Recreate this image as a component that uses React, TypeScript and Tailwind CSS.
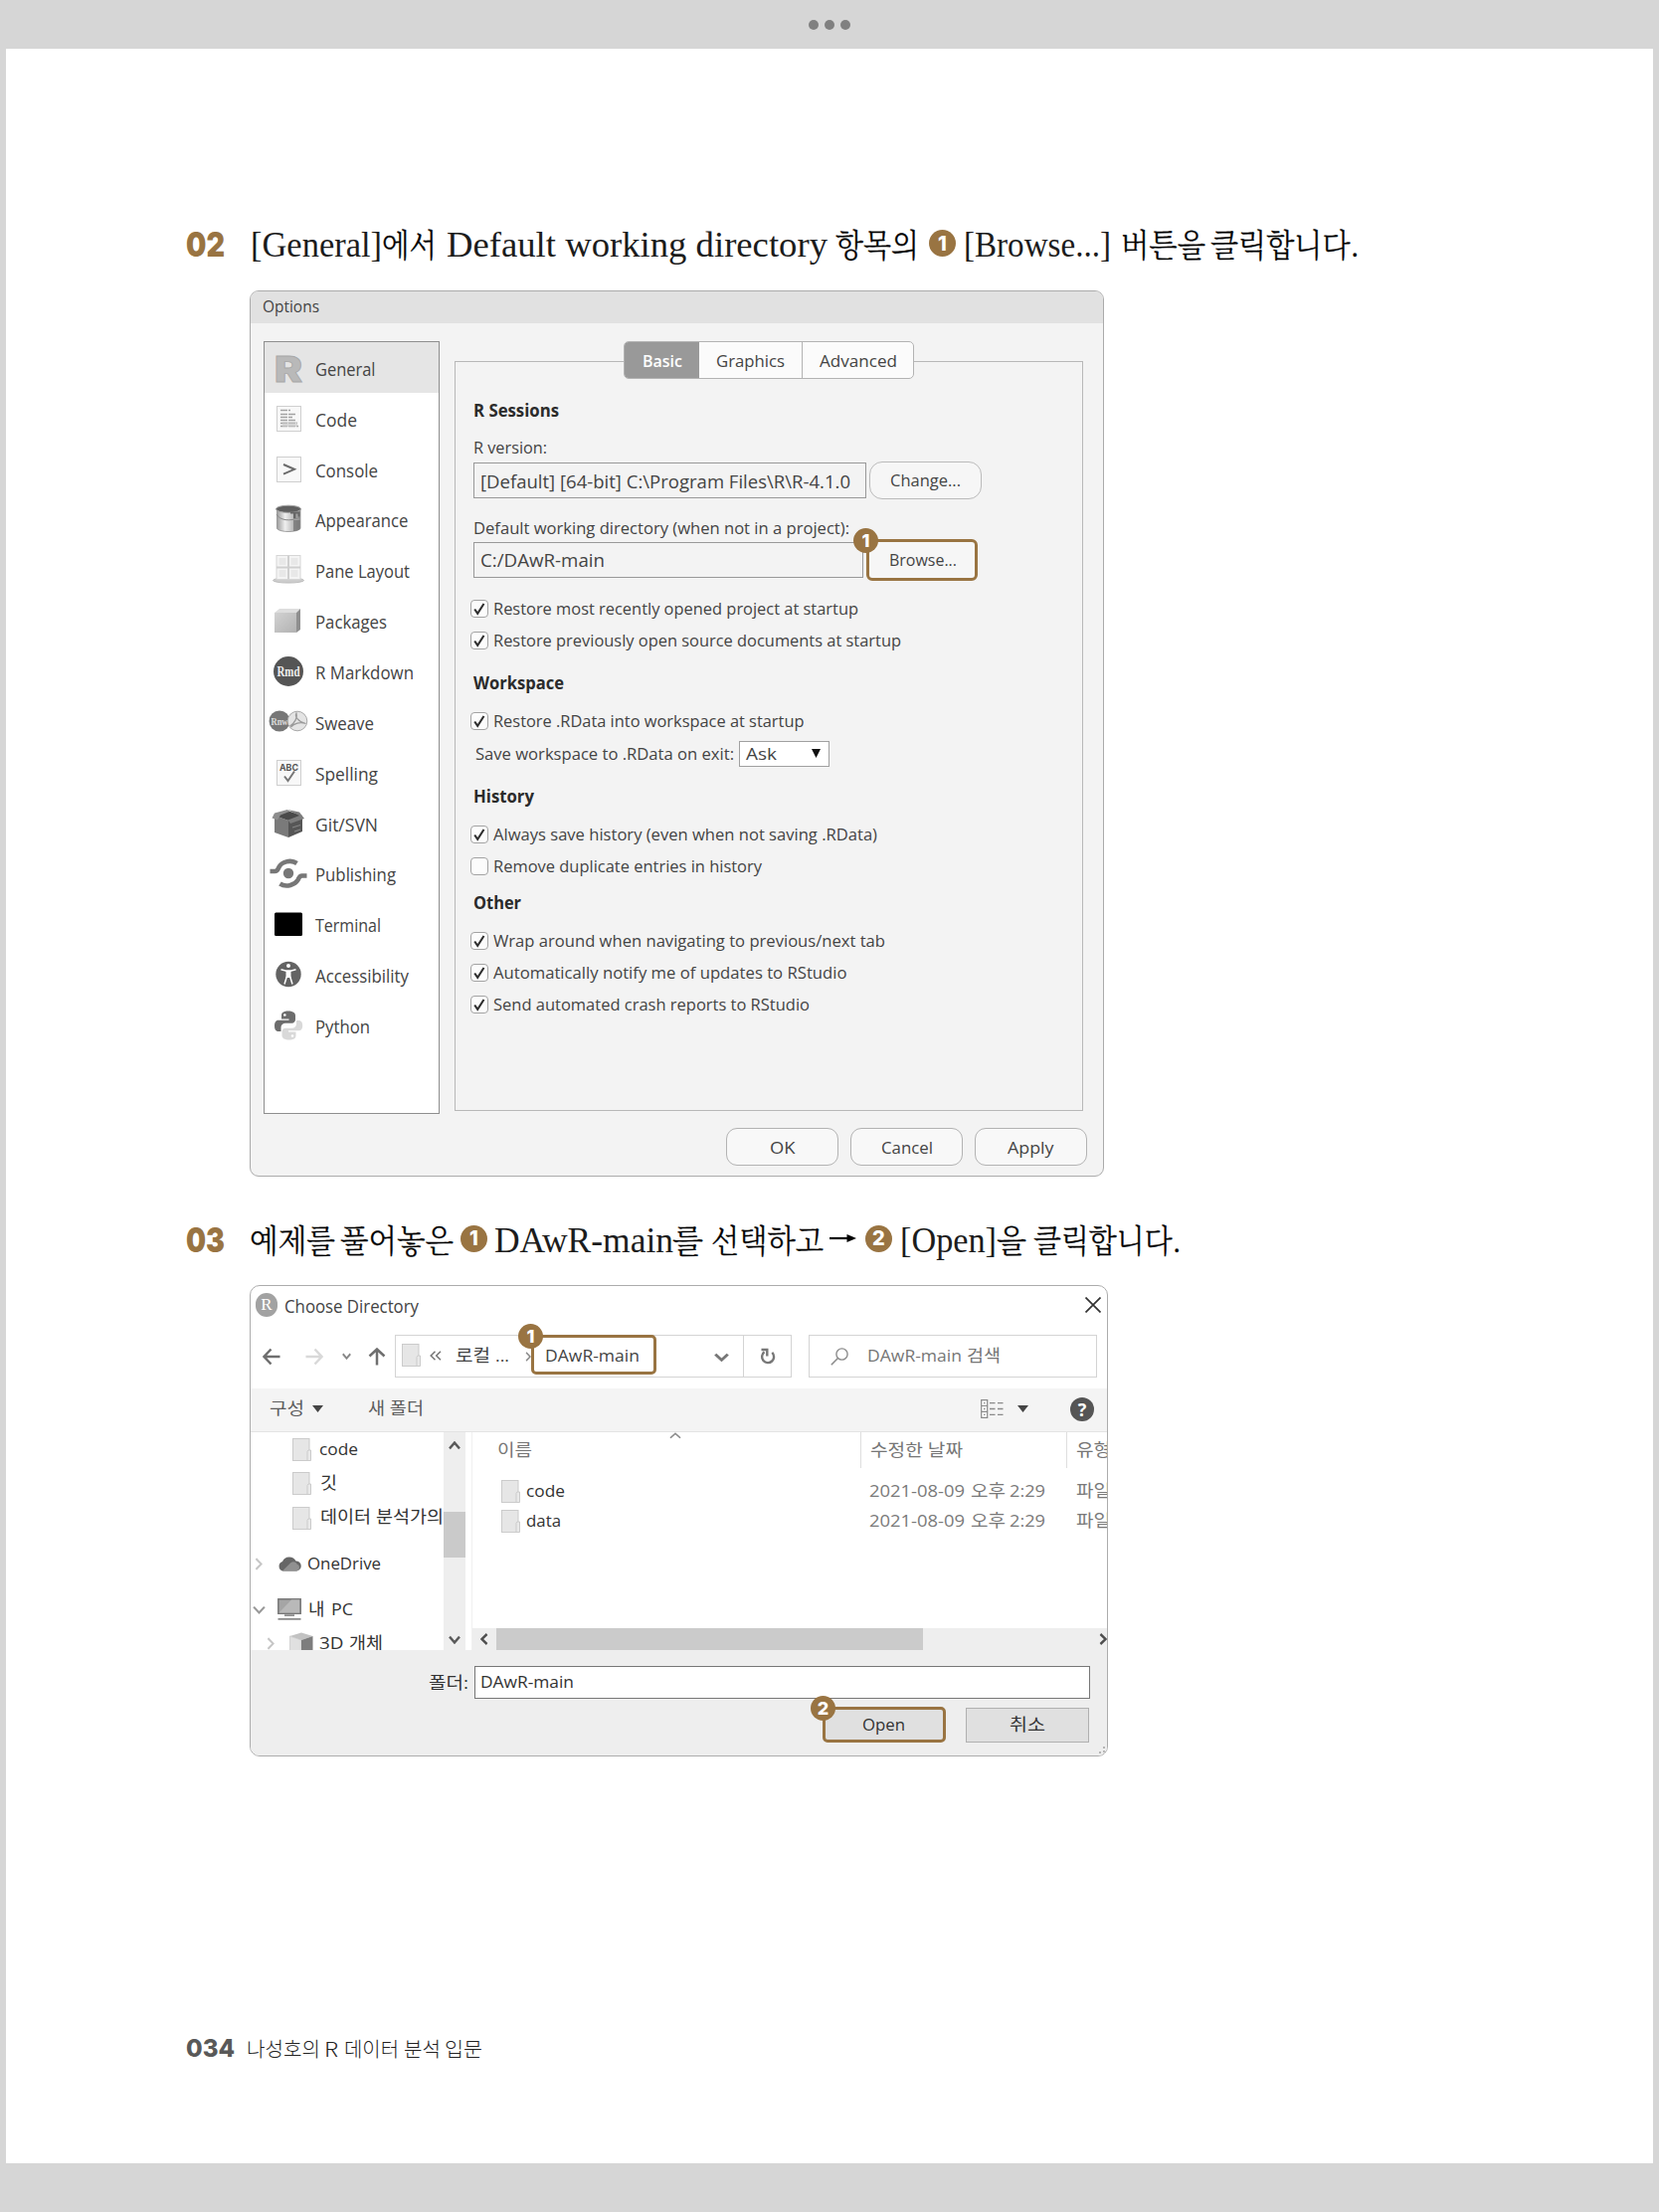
import React, { useLayoutEffect, useRef } from "react";

const UI = "font-['Open_Sans','Noto_Sans_CJK_KR',sans-serif]";

/** A run of text set to an exact width, condensed or widened as needed. */
function T({ w, c = "", children }: { w: number; c?: string; children: React.ReactNode }) {
  const ref = useRef<HTMLSpanElement>(null);
  useLayoutEffect(() => {
    const el = ref.current;
    if (!el) return;
    el.style.transform = "none";
    const n = el.getBoundingClientRect().width;
    if (n > 0) el.style.transform = `translateX(-1px) scaleX(${(w + 2) / n})`;
  }, [w]);
  return (
    <span className={`inline-block shrink-0 whitespace-pre ${c}`} style={{ width: w }}>
      <span ref={ref} className="inline-block origin-left">
        {children}
      </span>
    </span>
  );
}

function Badge({ n, c = "" }: { n: string; c?: string }) {
  return (
    <span
      className={`flex shrink-0 items-center justify-center rounded-full bg-[#997442] font-['Inter',sans-serif] leading-none font-extrabold text-white ${c}`}
    >
      {n}
    </span>
  );
}

const Lat = ({ w, c = "", children }: { w: number; c?: string; children: string }) => (
  <T w={w} c={`font-['Liberation_Serif',serif] text-[35px] leading-[40px] text-[#1c1c1c] ${c}`}>{children}</T>
);
const Kor = ({ w, c = "", children }: { w: number; c?: string; children: string }) => (
  <T w={w} c={`font-['Noto_Serif_CJK_KR','Noto_Sans_CJK_KR',serif] text-[32px] leading-[40px] font-light [-webkit-text-stroke:0.35px_#000] ${c}`}>
    {children}
  </T>
);

/* ---------- sidebar icons, 40 x 32 ---------- */

const Sheet = () => <rect x="8.5" y="3.5" width="24" height="25" fill="#f8f8f8" stroke="#cfcfcf" />;

const icons: Record<string, React.ReactNode> = {
  General: (
    <text x="6" y="29.500" fontFamily="Inter" fontWeight="900" fontSize="36" textLength="28" lengthAdjust="spacingAndGlyphs" fill="#b9b9b9" stroke="#a8a8a8" strokeWidth=".8">
      R
    </text>
  ),
  Code: (
    <g>
      <Sheet />
      <g stroke="#a2a2a2" strokeWidth="1.3">
        <path d="M12 7.5h10M12 11.5h15M12 14.5h12M12 17.5h16M12 20.5h17M12 23.500h18" strokeDasharray="7 1" />
      </g>
      <path d="M14 19h15v5H14z" fill="#c9c9c9" opacity=".6" />
    </g>
  ),
  Console: (
    <g>
      <Sheet />
      <path d="M15 11l11 4.800-11 4.800" fill="none" stroke="#6b6b6b" strokeWidth="2" />
    </g>
  ),
  Appearance: (
    <g>
      <path d="M8.500 5.500v20c3 4 20 4 23.500 0v-20z" fill="url(#metal)" stroke="#8d8d8d" strokeWidth=".8" />
      <ellipse cx="20" cy="5.800" rx="12.500" ry="3.600" fill="#5f5f5f" stroke="#a5a5a5" />
      <path d="M22 8.500h9.500v5h-2v-3h-2v5h-2.500v-5h-3z" fill="#666" />
      <path d="M8 11c3 6 13 8 24 3" fill="none" stroke="#8a8a8a" />
      <path d="M25 17h6.500v9c-2 1.500-4 2-6.500 2z" fill="#707070" opacity=".7" />
    </g>
  ),
  "Pane Layout": (
    <g>
      <ellipse cx="20" cy="26.500" rx="15.500" ry="2.600" fill="#cdcdcd" stroke="#b2b2b2" strokeWidth=".8" />
      <rect x="8" y="1.500" width="24" height="24" fill="#f4f4f4" stroke="#d6d6d6" />
      <path d="M20 1.500v24M8 13.500h24" stroke="#cfcfcf" strokeWidth="2" />
      <path d="M10.500 4h7v7h-7zM22.500 4h7v7h-7zM10.500 16h7v7h-7zM22.500 16h7v7h-7z" fill="#e8e8e8" />
    </g>
  ),
  Packages: (
    <g>
      <path d="M6 8l5-4h21l-4 4z" fill="#dedede" />
      <path d="M28 8l4-4v21l-4 3z" fill="#8f8f8f" />
      <rect x="6" y="8" width="22" height="20" fill="url(#metal2)" />
    </g>
  ),
  "R Markdown": (
    <g>
      <circle cx="20" cy="16" r="15" fill="#555" />
      <text x="8.500" y="21" fontFamily="Liberation Serif" fontWeight="700" fontSize="14" textLength="23" lengthAdjust="spacingAndGlyphs" fill="#eee">
        Rmd
      </text>
    </g>
  ),
  Sweave: (
    <g>
      <circle cx="11" cy="15" r="10.500" fill="#777" />
      <text x="2.500" y="19" fontFamily="Liberation Serif" fontWeight="700" fontSize="10" textLength="17" lengthAdjust="spacingAndGlyphs" fill="#ddd">
        Rnw
      </text>
      <circle cx="29" cy="15" r="9.800" fill="#e4e4e4" stroke="#a9a9a9" />
      <path d="M21.500 20c5-3 8-9 6.500-13-2 3 2 9 9.500 10.500-6-2-12 0-15 3.500" fill="none" stroke="#999" strokeWidth="1.200" />
    </g>
  ),
  Spelling: (
    <g>
      <Sheet />
      <text x="11" y="14" fontFamily="Inter" fontWeight="700" fontSize="9" textLength="19" lengthAdjust="spacingAndGlyphs" fill="#555">
        ABC
      </text>
      <path d="M16 19.500l3.500 4.500L26 14.500" fill="none" stroke="#777" strokeWidth="2" />
    </g>
  ),
  "Git/SVN": (
    <g>
      <path d="M6 8l14 5v17L6 25z" fill="#7a7a7a" />
      <path d="M20 13l14-5v16l-14 6z" fill="#565656" />
      <path d="M6 8l13-5 15 5-14 5z" fill="#4a4a4a" />
      <path d="M19 2L6 5.500 3.500 10.500 9 12.500l3-5L21 4z" fill="#8d8d8d" />
      <path d="M19 2l12 2.500 5 6.500-14 5-2.500-3.500L31 8z" fill="#7d7d7d" />
      <path d="M24 20l8-2.500M26 24l6-2" stroke="#858585" strokeWidth="1.200" />
    </g>
  ),
  Publishing: (
    <g fill="none" stroke="#777" strokeWidth="4.600">
      <circle cx="20" cy="16" r="5.200" fill="#777" stroke="none" />
      <path d="M1.500 14h4.800c2.800 0 3-2 4.300-4.400C13 5 22 1.500 28.500 6" />
      <path d="M38.500 18.500h-4.800c-2.800 0-3 2-4.300 4.400C27 27 18 31 11.500 26.500" />
    </g>
  ),
  Terminal: <rect x="6" y="4.500" width="28" height="23.500" rx="1.500" fill="#000" />,
  Accessibility: (
    <g>
      <circle cx="20" cy="15.500" r="12.700" fill="#636363" />
      <circle cx="20" cy="7" r="2" fill="#fff" />
      <path d="M12.500 10.800l5.500 1.400h4l5.500-1.400M18.300 18L16 25.500M21.700 18L24 25.500" fill="none" stroke="#fff" strokeWidth="1.500" />
      <path d="M17.500 11.500h5v7.500h-5z" fill="#fff" />
    </g>
  ),
  Python: (
    <g>
      <path d="M20 1.500c-5 0-7 1.500-7 4.500v3.500h7.500v1.300H10C7 10.800 6 13.500 6 16.500s1 5.500 4 5.500h2.500v-4c0-2.500 2-4.300 4.500-4.300h6.500c2 0 3.500-1.700 3.500-3.700V6c0-3-3-4.500-7-4.500z" fill="#6d6d6d" />
      <path d="M20.500 30.500c5 0 7-1.500 7-4.500v-3.500H20v-1.300h10.500c3 0 3.700-2.700 3.700-5.200s-1-5-4-5H28v3.500c0 2.500-2 4.300-4.500 4.300H17c-2 0-3.500 1.700-3.500 3.700V26c0 3 3 4.500 7 4.500z" fill="#d9d9d9" />
      <circle cx="16.300" cy="5.500" r="1.300" fill="#fff" />
      <circle cx="24" cy="26.500" r="1.300" fill="#fff" />
    </g>
  ),
};

const nav: [string, number][] = [
  ["General", 58.5], ["Code", 40], ["Console", 61], ["Appearance", 91.5], ["Pane Layout", 93],
  ["Packages", 70], ["R Markdown", 97], ["Sweave", 57], ["Spelling", 61], ["Git/SVN", 61],
  ["Publishing", 79], ["Terminal", 64], ["Accessibility", 92], ["Python", 53],
];

function Check({ w, on = true, c, children }: { w: number; on?: boolean; c: string; children: string }) {
  return (
    <div className={`-ml-[4px] flex h-6 items-center ${c}`}>
      <span className="flex size-[18px] shrink-0 items-center justify-center rounded-[4px] border border-[#a3a3a3] bg-[#fcfcfc]">
        {on && (
          <svg viewBox="0 0 16 16" className="size-[16px]">
            <path d="M3.200 8.500l3 4.300L12.500 3" fill="none" stroke="#2e2e2e" strokeWidth="2.100" />
          </svg>
        )}
      </span>
      <T w={w} c="ml-[6px] text-[17px] leading-6">{children}</T>
    </div>
  );
}

const Head = ({ w, c, children }: { w: number; c: string; children: string }) => (
  <div className={`h-6 ${c}`}>
    <T w={w} c="text-[17px] leading-6 font-bold text-[#2b2b2b]">{children}</T>
  </div>
);

const Btn = ({ w, children }: { w: number; children: string }) => (
  <div className="flex h-[38px] w-[113px] items-center justify-center rounded-[11px] border border-[#b3b3b3] bg-[#f8f8f8]">
    <T w={w} c="pt-px text-[17px]">{children}</T>
  </div>
);

function OptionsDialog() {
  return (
    <div className={`ml-[63px] flex h-[891px] w-[859px] flex-col overflow-hidden rounded-[9px] border border-[#ababab] bg-[#f3f3f3] text-[#444] ${UI}`}>
      <div className="flex h-[32px] shrink-0 items-center bg-[#e1e1e1] pb-[2px] pl-[13px]">
        <T w={55} c="text-[16.5px]">Options</T>
      </div>
      <div className="flex pt-[18px] pl-[13px]">
        <svg className="absolute h-0 w-0" aria-hidden>
          <defs>
            <linearGradient id="metal" x1="0" x2="1" y1="0" y2="0">
              <stop offset="0" stopColor="#9c9c9c" />
              <stop offset=".35" stopColor="#efefef" />
              <stop offset="1" stopColor="#8b8b8b" />
            </linearGradient>
            <linearGradient id="metal2" x1="0" x2="1" y1="0" y2="1">
              <stop offset="0" stopColor="#d2d2d2" />
              <stop offset="1" stopColor="#b2b2b2" />
            </linearGradient>
          </defs>
        </svg>
        <div className="h-[777px] w-[177px] shrink-0 border border-[#8f8f8f] bg-white">
          {nav.map(([name, w], i) => (
            <div key={name} className={`flex h-[50.850px] items-center pl-[4px] ${i === 0 ? "bg-[#e5e5e5]" : ""}`}>
              <svg viewBox="0 0 40 32" className="mt-px h-[32px] w-[40px] shrink-0">{icons[name]}</svg>
              <T w={w} c="mt-[4px] ml-[8px] text-[18px]">{name}</T>
            </div>
          ))}
        </div>
        <div className="relative mt-[20px] ml-[15px] h-[754px] w-[632px] border border-[#b8b8b8] pt-[37px] pl-[19px]">
          <div className="absolute -top-[21px] left-[169px] flex h-[38px] w-[292px] overflow-hidden rounded-[5px] border border-[#b3b3b3] bg-[#fbfbfb]">
            <div className="flex w-[75px] items-center justify-center bg-[#999] text-white">
              <T w={38} c="pt-px text-[17px] font-semibold">Basic</T>
            </div>
            <div className="flex w-[103px] items-center justify-center">
              <T w={67} c="pt-px text-[17px]">Graphics</T>
            </div>
            <div className="flex flex-1 items-center justify-center border-l border-[#b3b3b3]">
              <T w={76} c="pt-px text-[17px]">Advanced</T>
            </div>
          </div>
          <Head w={84} c="">R Sessions</Head>
          <div className="mt-[13px] h-6">
            <T w={72} c="text-[17px] leading-6">R version:</T>
          </div>
          <div className="-ml-px mt-[3px] flex h-[36px] items-center">
            <div className="flex h-full w-[395px] items-center border border-[#999] pt-[2px] pl-[7px]">
              <T w={370} c="text-[18px]">[Default] [64-bit] C:\Program Files\R\R-4.1.0</T>
            </div>
            <div className="ml-[3px] flex h-[38px] w-[113px] items-center justify-center rounded-[13px] border border-[#bbb] bg-[#f6f6f6]">
              <T w={69} c="text-[17px]">Change...</T>
            </div>
          </div>
          <div className="mt-[18px] h-6">
            <T w={376} c="text-[17px] leading-6">Default working directory (when not in a project):</T>
          </div>
          <div className="-ml-px mt-[2px] flex h-[36px] items-center">
            <div className="flex h-full w-[392px] items-center border border-[#999] pt-px pl-[7px]">
              <T w={123} c="text-[18px]">C:/DAwR-main</T>
            </div>
            <div className="relative ml-[3px] flex h-[42px] w-[112px] items-center justify-center rounded-[6px] border-[3px] border-[#997442] bg-[#f6f6f6]">
              <T w={66} c="pl-px text-[17px]">Browse...</T>
              <Badge n="1" c="absolute -top-[14px] -left-[16px] size-[25px] text-[18px]" />
            </div>
          </div>
          <Check w={365} c="mt-[19px]">Restore most recently opened project at startup</Check>
          <Check w={408} c="mt-2">Restore previously open source documents at startup</Check>
          <Head w={89} c="mt-[19px]">Workspace</Head>
          <Check w={310.5} c="mt-[14px]">Restore .RData into workspace at startup</Check>
          <div className="mt-[9px] flex h-6 items-center pl-[2px]">
            <T w={258} c="text-[17px] leading-6">Save workspace to .RData on exit:</T>
            <div className="ml-[6px] flex h-[26px] w-[91px] items-center justify-between border border-[#a0a0a0] bg-white pr-[8px] pl-[7px]">
              <T w={29} c="-mt-px text-[17px] leading-6">Ask</T>
              <svg viewBox="0 0 9 9" className="-mt-px size-[9px]"><path d="M0 0h9L4.500 9z" fill="#111" /></svg>
            </div>
          </div>
          <Head w={59} c="mt-[19px]">History</Head>
          <Check w={384} c="mt-[14px]">Always save history (even when not saving .RData)</Check>
          <Check w={268} on={false} c="mt-2">Remove duplicate entries in history</Check>
          <Head w={46} c="mt-[13px]">Other</Head>
          <Check w={392} c="mt-[14px]">Wrap around when navigating to previous/next tab</Check>
          <Check w={353.5} c="mt-2">Automatically notify me of updates to RStudio</Check>
          <Check w={316} c="mt-2">Send automated crash reports to RStudio</Check>
        </div>
      </div>
      <div className="mt-[14px] flex justify-end gap-3 pr-[16px]">
        <Btn w={23.5}>OK</Btn>
        <Btn w={50}>Cancel</Btn>
        <Btn w={44.5}>Apply</Btn>
      </div>
    </div>
  );
}

const Folder = ({ c = "" }: { c?: string }) => (
  <svg viewBox="0 0 19 23" className={`h-[23px] w-[19px] shrink-0 ${c}`}>
    <rect x=".5" y=".5" width="16.500" height="22" fill="#e6e6e6" stroke="#cbcbcb" />
    <path d="M15 22.500v-9l1-1.500h2.500v10.500z" fill="#e9e9e9" stroke="#cbcbcb" />
  </svg>
);

const Chev = ({ d, c, s = "#666", sw = 2 }: { d: "up" | "down" | "left" | "right"; c: string; s?: string; sw?: number }) => {
  const p = { up: "M1 7l5-5.500L11 7", down: "M1 1.500L6 7l5-5.500", left: "M7 1L1.500 6 7 11", right: "M1.500 1L7 6l-5.500 5" }[d];
  const v = d === "up" || d === "down" ? "0 0 12 8.500" : "0 0 8.500 12";
  return (
    <svg viewBox={v} preserveAspectRatio="none" className={`shrink-0 ${c}`}>
      <path d={p} fill="none" stroke={s} strokeWidth={sw} />
    </svg>
  );
};

const Tri = ({ c = "" }: { c?: string }) => (
  <svg viewBox="0 0 11 7" className={`h-[7px] w-[11px] shrink-0 ${c}`}><path d="M0 0h11L5.500 7z" fill="#444" /></svg>
);

function Arrow({ s, c }: { s: string; c: string }) {
  return (
    <svg viewBox="0 0 18 18" className={`size-[18px] shrink-0 ${c}`}>
      <path d="M17.500 9H2M8.500 1.500L1.500 9l7 7.500" fill="none" stroke={s} strokeWidth="2.500" />
    </svg>
  );
}

function FileRow({ name, w }: { name: string; w: number }) {
  return (
    <div className="flex h-[30px] items-center pl-[29px] text-[#333]">
      <Folder />
      <T w={w} c="ml-[7px] text-[17px]">{name}</T>
      <div className="flex text-[17px] text-[#7a7a7a]" style={{ marginLeft: 345 - w }}>
        <T w={94}>2021-08-09</T>
        <T w={33} c="ml-[8px]">오후</T>
        <T w={34} c="ml-[6px]">2:29</T>
        <T w={33} c="ml-[33px]">파일</T>
      </div>
    </div>
  );
}

function DirectoryDialog() {
  return (
    <div className={`relative ml-[63px] flex h-[474px] w-[863px] flex-col overflow-hidden rounded-[10px] border border-[#adadad] bg-white text-[17px] leading-6 text-[#444] ${UI}`}>
      <div className="flex h-[38px] shrink-0 items-center pl-[5px]">
        <span className="flex h-[24px] w-[22px] items-center justify-center rounded-full bg-[#a2a2a2] font-['Liberation_Serif',serif] text-[17px] text-white">R</span>
        <T w={133} c="mt-px ml-[8px] text-[17.5px]">Choose Directory</T>
        <svg viewBox="0 0 16 16" className="mr-[6px] ml-auto size-[16px]">
          <path d="M.5.5l15 15M15.500.5l-15 15" stroke="#333" strokeWidth="1.700" />
        </svg>
      </div>
      <div className="flex h-[65px] shrink-0 items-center">
        <Arrow s="#6f6f6f" c="ml-[12px]" />
        <Arrow s="#d9d9d9" c="ml-[25px] rotate-180" />
        <Chev d="down" c="-mt-px ml-[19px] h-[7px] w-[9px]" s="#888" sw={2.4} />
        <Arrow s="#6f6f6f" c="ml-[17px] mt-px rotate-90" />
        <div className="ml-[9px] flex h-[43px] w-[399px] items-center border border-[#d4d4d4]">
          <Folder c="ml-[6px] -mt-[2px]" />
          <svg viewBox="0 0 12 10" className="ml-[9px] -mt-px h-[10px] w-[12px]">
            <path d="M5.500.8L1.200 5l4.300 4.200M11 .8L6.700 5 11 9.200" fill="none" stroke="#777" strokeWidth="1.500" />
          </svg>
          <T w={33} c="ml-[15px] -mt-px">로컬</T>
          <T w={12} c="ml-[7px] -mt-px">...</T>
          <Chev d="right" c="ml-[17px] h-[10px] w-[6px]" s="#888" />
          <div className="relative -mt-[3px] flex h-[40px] w-[126px] shrink-0 items-center rounded-[5px] border-[3px] border-[#997442] bg-white pl-[12px]">
            <T w={93} c="mt-[2px]">DAwR-main</T>
            <Badge n="1" c="absolute -top-[14px] -left-[16px] size-[25px] text-[18px]" />
          </div>
          <Chev d="down" c="ml-[58px] mt-px h-[9px] w-[15px]" s="#777" sw={2.4} />
          <div className="ml-auto flex h-full w-[48px] items-center justify-center border-l border-[#d4d4d4]">
            <svg viewBox="0 0 16 17" className="h-[17px] w-[16px]">
              <path d="M12.300 4.800A6 6 0 1 1 4.500 4.300" fill="none" stroke="#777" strokeWidth="2.400" />
              <path d="M1.500 2h5.800v6.500" fill="none" stroke="#777" strokeWidth="2.400" />
            </svg>
          </div>
        </div>
        <div className="ml-[17px] flex h-[43px] w-[290px] items-center border border-[#d4d4d4] text-[#767676]">
          <svg viewBox="0 0 18 18" className="ml-[21px] size-[18px]">
            <circle cx="11.500" cy="6.500" r="5.600" fill="none" stroke="#8c8c8c" strokeWidth="1.400" />
            <path d="M7.500 10.500L.8 17.200" stroke="#8c8c8c" strokeWidth="1.600" />
          </svg>
          <T w={93} c="-mt-px ml-[20px]">DAwR-main</T>
          <T w={32} c="-mt-px ml-[7px]">검색</T>
        </div>
      </div>
      <div className="flex h-[44px] shrink-0 items-center border-b border-[#e3e3e3] bg-[#f4f4f4] pb-[2px] text-[#5c5c5c]">
        <T w={33} c="-mt-px ml-[20px]">구성</T>
        <Tri c="ml-[9px]" />
        <T w={54} c="-mt-px ml-[46px]">새 폴더</T>
        <svg viewBox="0 0 23 19" className="ml-auto h-[19px] w-[23px]">
          <path d="M.7.7h6v17.600h-6zM.7 6.500h6M.7 12.400h6" fill="#fff" stroke="#8a8a8a" strokeWidth="1.200" />
          <path d="M3 3.600h1.500M3 9.500h1.500M3 15.400h1.500M9 3.600h5.500M17 3.600h5.500M9 9.500h5.500M17 9.500h5.500M9 15.400h5.500M17 15.400h5.500" stroke="#8a8a8a" strokeWidth="1.300" />
        </svg>
        <Tri c="ml-[14px]" />
        <span className="mr-[13px] ml-[42px] flex size-[24px] items-center justify-center rounded-full bg-[#555] text-[18px] font-bold text-white">?</span>
      </div>
      <div className="flex h-[219px] shrink-0">
        <div className="w-[194px] shrink-0 overflow-hidden text-[#333]">
          <div className="flex h-[34.500px] items-center pl-[42px]"><Folder /><T w={37} c="-mt-px ml-[9px]">code</T></div>
          <div className="flex h-[34.500px] items-center pl-[42px]"><Folder /><T w={15} c="-mt-[2px] ml-[10px]">깃</T></div>
          <div className="flex h-[34.500px] items-center pl-[42px]"><Folder /><T w={122} c="-mt-[2px] ml-[10px]">데이터 분석가의</T></div>
          <div className="mt-[11px] flex h-[35px] items-center pl-[4px]">
            <Chev d="right" c="h-[13px] w-[8px]" s="#c6c6c6" />
            <svg viewBox="0 0 24 16" className="ml-[15px] h-[16px] w-[24px]">
              <path d="M5 15.500a5 5 0 0 1 0-9.500A7.500 7.500 0 0 1 18.500 5.500 5 5 0 0 1 19 15.500z" fill="#666" />
              <path d="M5 15.500L13 7.500c3-2.500 6-.5 6.500 1a3.700 3.700 0 0 1 0 7z" fill="#909090" />
            </svg>
            <T w={72} c="-mt-px ml-[7px]">OneDrive</T>
          </div>
          <div className="mt-[11px] flex h-[35px] items-center pl-[2px]">
            <Chev d="down" c="h-[9px] w-[13px]" s="#999" />
            <svg viewBox="0 0 24 22" className="ml-[12px] h-[22px] w-[24px]">
              <rect x=".8" y=".8" width="22.400" height="14.500" fill="#a5a5a5" stroke="#777" strokeWidth="1.500" />
              <path d="M1.500 14.500L14 1.500h8v13z" fill="#b9b9b9" />
              <path d="M7 17.200h10M.5 20.800h23" stroke="#8b8b8b" strokeWidth="1.700" />
            </svg>
            <T w={14.5} c="ml-[8px] -mt-px">내</T>
            <T w={20} c="ml-[8px] -mt-px">PC</T>
          </div>
          <div className="flex h-[34.500px] items-center pl-[16px]">
            <Chev d="right" c="h-[13px] w-[8px]" s="#c6c6c6" />
            <svg viewBox="0 0 24 24" className="ml-[15px] h-[24px] w-[24px]">
              <path d="M12 .5L23.500 4 12 8 .5 4z" fill="#c2c2c2" />
              <path d="M.5 4L12 8v15L.5 20z" fill="#e0e0e0" stroke="#c0c0c0" strokeWidth=".6" />
              <path d="M23.500 4L12 8v15l11.500-3z" fill="#7d7d7d" />
            </svg>
            <T w={22.5} c="-mt-px ml-[7px]">3D</T>
            <T w={32} c="-mt-px ml-[7px]">개체</T>
          </div>
        </div>
        <div className="flex w-[22px] shrink-0 flex-col items-center bg-[#eeeeee]">
          <Chev d="up" c="mt-[9px] h-[9px] w-[12px]" s="#5a5a5a" sw={2.4} />
          <div className="mt-[62px] h-[46px] w-full bg-[#cacaca]" />
          <Chev d="down" c="mt-[78px] h-[9px] w-[12px]" s="#5a5a5a" sw={2.4} />
        </div>
        <div className="ml-[6px] flex min-w-0 flex-1 flex-col overflow-hidden border-l border-[#f0f0f0]">
          <div className="relative flex h-[36px] shrink-0 items-center text-[#767676]">
            <T w={33} c="ml-[26px]">이름</T>
            <Chev d="up" c="absolute top-0 left-[198px] h-[7px] w-[12px]" s="#8a8a8a" sw={1.6} />
            <div className="ml-[331px] h-full w-px shrink-0 bg-[#dedede]" />
            <T w={91} c="ml-[10px]">수정한 날짜</T>
            <div className="ml-[105px] h-full w-px shrink-0 bg-[#dedede]" />
            <T w={33} c="ml-[10px]">유형</T>
          </div>
          <div className="mt-[8px] flex flex-col">
            <FileRow name="code" w={37} />
            <FileRow name="data" w={33} />
          </div>
          <div className="mt-auto flex h-[22px] shrink-0 items-center bg-[#eeeeee]">
            <Chev d="left" c="ml-[8px] h-[12px] w-[8px]" s="#4d4d4d" sw={2.4} />
            <div className="ml-[8px] h-full w-[429px] bg-[#cbcbcb]" />
            <Chev d="right" c="ml-auto h-[12px] w-[8px]" s="#4d4d4d" sw={2.4} />
          </div>
        </div>
      </div>
      <div className="flex flex-1 flex-col bg-[#eeeeee] text-[#333]">
        <div className="mt-[16px] flex h-[33px] items-center">
          <T w={38} c="ml-[180px]">폴더:</T>
          <div className="ml-[7px] flex h-[33px] w-[619px] items-center border border-[#777] bg-white pl-[6px]">
            <T w={92} c="-mt-[2px]">DAwR-main</T>
          </div>
        </div>
        <div className="mt-[8px] flex items-center">
          <div className="relative ml-[575px] flex h-[36px] w-[124px] items-center justify-center rounded-[5px] border-[3px] border-[#997442] bg-[#e0e0e0]">
            <T w={41} c="-ml-px -mt-px">Open</T>
            <Badge n="2" c="absolute -top-[14px] -left-[15px] size-[25px] text-[18px]" />
          </div>
          <div className="ml-[20px] flex h-[35px] w-[124px] items-center justify-center border border-[#b0b0b0] bg-[#e0e0e0]">
            <T w={34} c="-mt-px">취소</T>
          </div>
        </div>
      </div>
      <svg viewBox="0 0 8 8" className="absolute right-[1px] bottom-[1px] size-[8px]">
        <path d="M5 0h2v2H5zM5 4h2v2H5zM1 5h2v2H1z" fill="#b5b5b5" />
      </svg>
    </div>
  );
}

const Num = ({ children }: { children: string }) => (
  <T w={37} c="font-['Inter',sans-serif] text-[34px] leading-[40px] font-black text-[#997442]">{children}</T>
);

export default function App() {
  return (
    <div className="flex h-[2224px] w-[1668px] flex-col overflow-hidden bg-[#d6d6d6]">
      <div className="flex h-[49px] shrink-0 items-center justify-center gap-[6px]">
        <span className="size-[10px] rounded-full bg-[#808080]" />
        <span className="size-[10px] rounded-full bg-[#808080]" />
        <span className="size-[10px] rounded-full bg-[#808080]" />
      </div>
      <div className="mx-[6px] flex h-[2126px] flex-col bg-white pl-[182px] text-black">
        <div className="mt-[175px] flex h-[40px] items-baseline">
          <Num>02</Num>
          <Lat w={130} c="ml-[28px]">[General]</Lat>
          <Kor w={53} c="ml-[2px]">에서</Kor>
          <Lat w={381} c="ml-[12px]">Default working directory</Lat>
          <Kor w={82} c="ml-[10px]">항목의</Kor>
          <Badge n="1" c="mt-px ml-[11px] size-[27px] self-center text-[20px]" />
          <Lat w={146} c="ml-[9px]">[Browse...]</Lat>
          <Kor w={83} c="ml-[12px]">버튼을</Kor>
          <Kor w={148} c="ml-[7px]">클릭합니다.</Kor>
        </div>
        <div className="mt-[28px]">
          <OptionsDialog />
        </div>
        <div className="mt-[42px] flex h-[40px] items-baseline">
          <Num>03</Num>
          <Kor w={84} c="ml-[27px]">예제를</Kor>
          <Kor w={112} c="ml-[7px]">풀어놓은</Kor>
          <Badge n="1" c="ml-[8px] size-[27px] self-center text-[20px]" />
          <Lat w={178} c="ml-[8px]">DAwR-main</Lat>
          <Kor w={29} c="ml-px">를</Kor>
          <Kor w={111} c="ml-[10px]">선택하고</Kor>
          <svg viewBox="0 0 27 12" className="ml-[7px] h-[12px] w-[27px] self-center">
            <path d="M0 6h19" stroke="#000" strokeWidth="2.200" />
            <path d="M17.500 2L27 6l-9.500 4z" fill="#000" />
          </svg>
          <Badge n="2" c="ml-[9px] size-[27px] self-center text-[20px]" />
          <Lat w={95} c="ml-[9px]">[Open]</Lat>
          <Kor w={28} c="ml-[2px]">을</Kor>
          <Kor w={147} c="ml-[9px]">클릭합니다.</Kor>
        </div>
        <div className="mt-[27px]">
          <DirectoryDialog />
        </div>
        <div className="mt-[278px] flex h-[30px] items-baseline text-[#222]">
          <T w={47} c="font-['Inter',sans-serif] text-[25px] leading-[30px] font-extrabold text-[#595959]">034</T>
          <div className="flex items-baseline font-['Noto_Sans_CJK_KR',sans-serif] text-[20.500px] leading-[30px] font-light">
            <T w={72} c="ml-[14px]">나성호의</T>
            <T w={12} c="ml-[6px]">R</T>
            <T w={53} c="ml-[8px]">데이터</T>
            <T w={35} c="ml-[7px]">분석</T>
            <T w={36} c="ml-[6px]">입문</T>
          </div>
        </div>
      </div>
    </div>
  );
}
